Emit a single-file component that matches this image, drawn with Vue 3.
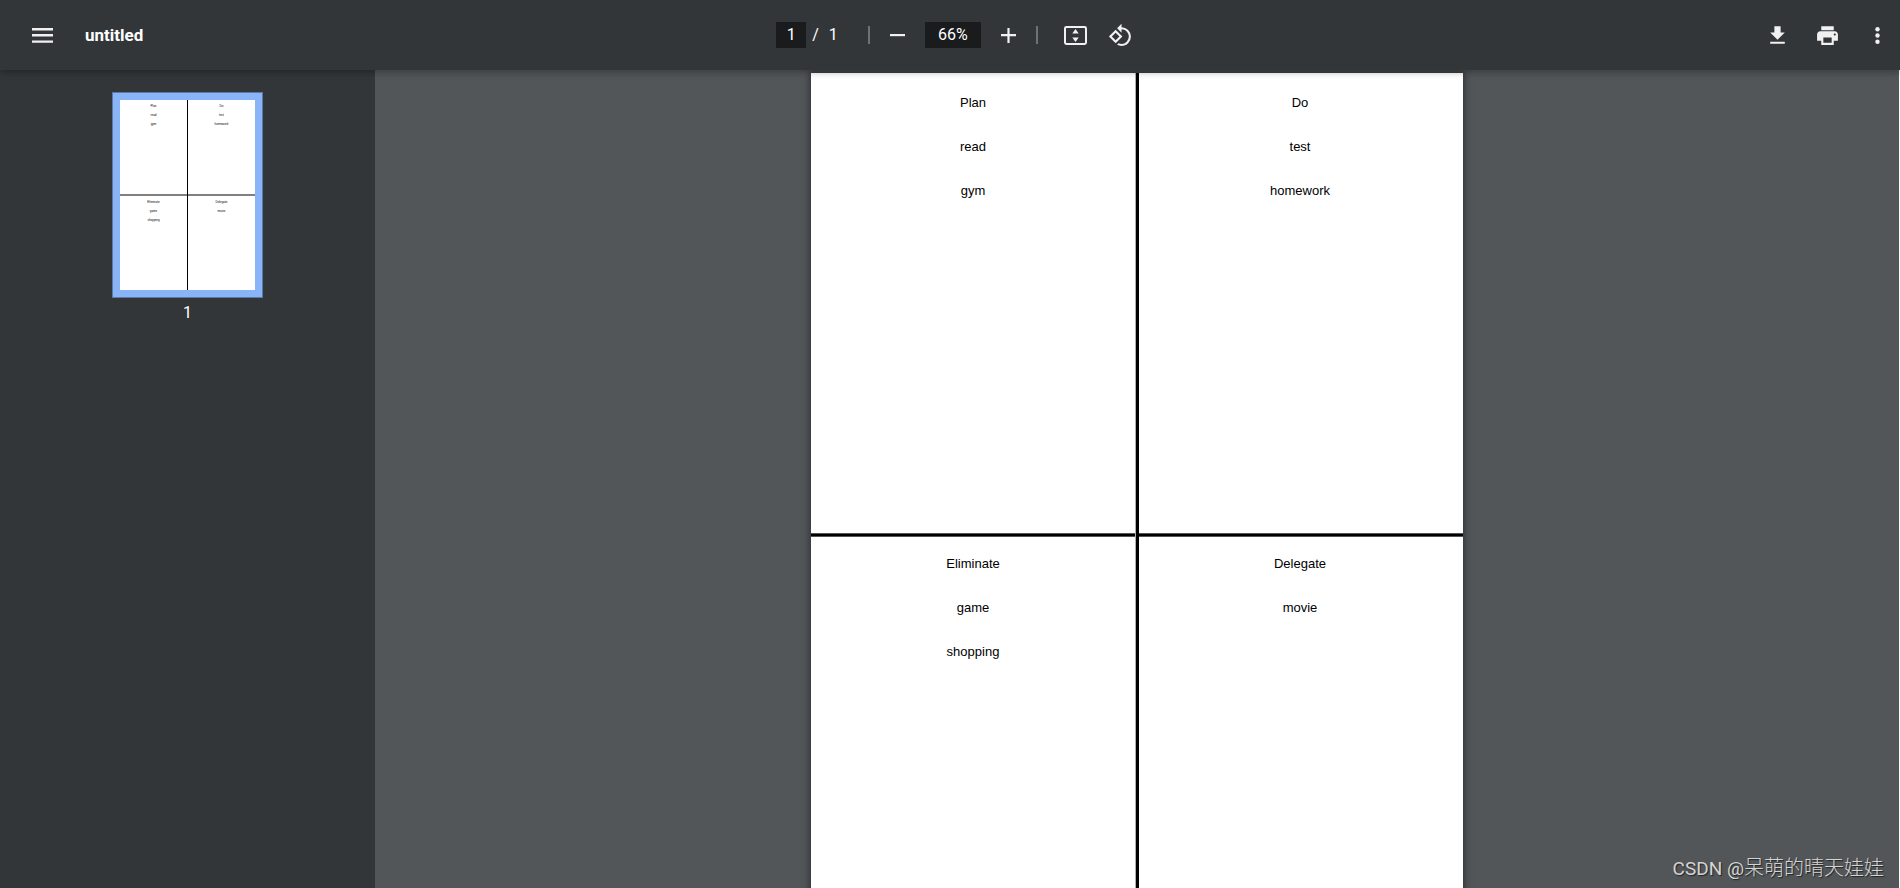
<script setup>
import { ref } from 'vue'

const pageNumber = ref('1')
const zoomLevel = ref('66%')

const quadrants = [
  { id: 'plan', items: ['Plan', 'read', 'gym'] },
  { id: 'do', items: ['Do', 'test', 'homework'] },
  { id: 'eliminate', items: ['Eliminate', 'game', 'shopping'] },
  { id: 'delegate', items: ['Delegate', 'movie'] },
]
</script>

<template>
  <div class="viewer">
    <header class="toolbar">
      <div class="start">
        <button class="tool" type="button" aria-label="Menu">
          <svg width="25" height="25" viewBox="0 0 25 25">
            <path d="M2 5h21v2.4H2zM2 11h21v2.4H2zM2 17.4h21v2.4H2z" />
          </svg>
        </button>
        <h1 class="title">untitled</h1>
      </div>

      <div class="center">
        <input v-model="pageNumber" class="field field-page" type="text" aria-label="Page number" />
        <span class="slash">/</span>
        <span class="total">1</span>
        <span class="divider"></span>
        <button class="tool" type="button" aria-label="Zoom out">
          <svg width="25" height="25" viewBox="0 0 25 25"><path d="M5 11h15v2.2H5z" /></svg>
        </button>
        <input v-model="zoomLevel" class="field field-zoom" type="text" aria-label="Zoom level" />
        <button class="tool" type="button" aria-label="Zoom in">
          <svg width="25" height="25" viewBox="0 0 25 25">
            <path d="M5 11h6.4V5h2.2v6H20v2.2h-6.4V20h-2.2v-6.8H5z" />
          </svg>
        </button>
        <span class="divider divider-wide"></span>
        <button class="tool" type="button" aria-label="Fit to page">
          <svg width="25" height="25" viewBox="0 0 25 25">
            <rect x="2" y="4" width="21" height="17" rx="1.4" fill="none" stroke="#f1f1f1" stroke-width="2" />
            <path d="M12.5 6l3.200 4.600H9.300zM12.500 19l3.200-4.600H9.300z" />
          </svg>
        </button>
        <button class="tool tool-rotate" type="button" aria-label="Rotate counterclockwise">
          <svg width="25" height="25" viewBox="0 0 24 24">
            <path
              d="M7.340 6.410L.86 12.900l6.490 6.480 6.490-6.480-6.500-6.490zM3.690 12.900l3.660-3.660L11 12.900l-3.660 3.660-3.650-3.660zm15.670-6.260A8.950 8.950 0 0 0 13 4V.760L8.760 5 13 9.240V6c1.790 0 3.580.680 4.950 2.050a7.007 7.007 0 0 1 0 9.900 6.973 6.973 0 0 1-7.790 1.440l-1.490 1.490C10.020 21.620 11.510 22 13 22c2.300 0 4.610-.880 6.360-2.640a8.980 8.980 0 0 0 0-12.720z"
            />
          </svg>
        </button>
      </div>

      <div class="end">
        <button class="tool" type="button" aria-label="Download">
          <svg width="25" height="25" viewBox="0 0 24 24">
            <path d="M19 9h-4V3H9v6H5l7 7 7-7zM5 18v2h14v-2H5z" />
          </svg>
        </button>
        <button class="tool" type="button" aria-label="Print">
          <svg width="25" height="25" viewBox="0 0 24 24">
            <path
              d="M19 8H5c-1.660 0-3 1.340-3 3v6h4v4h12v-4h4v-6c0-1.660-1.340-3-3-3zm-3 11H8v-5h8v5zm3-7c-.55 0-1-.45-1-1s.45-1 1-1 1 .45 1 1-.45 1-1 1zm-1-9H6v4h12V3z"
            />
          </svg>
        </button>
        <button class="tool" type="button" aria-label="More actions">
          <svg width="25" height="25" viewBox="0 0 25 25">
            <circle cx="12.500" cy="6.200" r="2.200" />
            <circle cx="12.500" cy="12.500" r="2.200" />
            <circle cx="12.500" cy="18.800" r="2.200" />
          </svg>
        </button>
      </div>
    </header>

    <div class="body">
      <aside class="sidebar">
        <button class="thumb" type="button" aria-label="Thumbnail for page 1">
          <span v-for="q in quadrants" :key="q.id" class="mini" :class="'at-' + q.id">
            <span v-for="item in q.items" :key="item" class="mini-line">{{ item }}</span>
          </span>
          <span class="mini-rule-h"></span>
          <span class="mini-rule-v"></span>
        </button>
        <span class="thumb-label">1</span>
      </aside>

      <main class="document">
        <article class="page">
          <section v-for="q in quadrants" :key="q.id" class="quadrant" :class="'at-' + q.id">
            <p v-for="item in q.items" :key="item" class="entry">{{ item }}</p>
          </section>
          <div class="rule-h"></div>
          <div class="rule-v"></div>
        </article>
      </main>
    </div>

    <div class="watermark"><span class="site">CSDN @</span>呆萌的晴天娃娃</div>
  </div>
</template>

<style>
body {
  background: #525659;
  overflow: hidden;
}
</style>

<style scoped>
.viewer {
  display: flex;
  flex-direction: column;
  height: 100vh;
  overflow: hidden;
  position: relative;
  font-family: Roboto, "Liberation Sans", sans-serif;
  font-size: 16px;
  color: #fff;
}

.toolbar {
  display: grid;
  grid-template-columns: 1fr auto 1fr;
  align-items: center;
  flex: none;
  height: 70px;
  background: #323639;
  box-shadow: 0 2px 8px rgba(0, 0, 0, 0.2), 0 3px 4px rgba(0, 0, 0, 0.1);
  position: relative;
  z-index: 2;
}

.start,
.center,
.end {
  display: flex;
  align-items: center;
}

.start {
  padding-left: 22px;
}

.center {
  padding-left: 17px;
}

.end {
  justify-content: flex-end;
  gap: 9px;
  padding-right: 2px;
}

.title {
  margin: 0 0 0 22px;
  font-size: 17px;
  line-height: 24px;
  font-weight: 700;
}

.tool {
  display: block;
  width: 41px;
  height: 41px;
  margin: 1px 0 0;
  padding: 8px;
  border: 0;
  border-radius: 50%;
  background: none;
}

.tool svg {
  display: block;
  fill: #f1f1f1;
}

.tool-rotate {
  margin-left: 4px;
}

.field {
  box-sizing: border-box;
  height: 26px;
  margin: 0;
  padding: 0 0 1px;
  border: 0;
  background: #191b1c;
  color: #fff;
  font: 16px Roboto, "Liberation Sans", sans-serif;
  text-align: center;
  outline: 0;
}

.field-page {
  width: 30px;
}

.field-zoom {
  width: 56px;
  margin: 0 7px;
}

.slash,
.total {
  line-height: 24px;
}

.slash {
  margin-left: 6px;
}

.total {
  width: 10px;
  margin-left: 10px;
}

.divider {
  width: 2px;
  height: 18px;
  margin: 0 7px 0 29px;
  background: #6f7274;
}

.divider-wide {
  margin: 0 17px 0 7px;
}

.body {
  display: flex;
  flex: 1;
  min-height: 0;
}

.sidebar {
  display: flex;
  flex-direction: column;
  align-items: center;
  flex: none;
  box-sizing: border-box;
  width: 375px;
  padding-top: 22px;
  background: #323639;
}

.thumb,
.page {
  display: grid;
  background: #fff;
}

.thumb {
  box-sizing: border-box;
  grid-template: 1fr 2px 1fr / 1fr 1px 1fr;
  width: 151px;
  height: 206px;
  margin: 0;
  padding: 0;
  border: 8px solid #8ab4f8;
  outline: 1px solid #5b79a8;
  outline-offset: -1px;
  color: #000;
  font: 3px "Liberation Sans", Arial, sans-serif;
}

.thumb-label {
  margin-top: 3px;
  line-height: 24px;
}

.mini {
  display: flex;
  flex-direction: column;
  align-items: center;
  padding-top: 2px;
}

.mini-line {
  line-height: 9px;
}

.at-plan {
  grid-area: 1 / 1;
}

.at-do {
  grid-area: 1 / 3;
}

.at-eliminate {
  grid-area: 3 / 1;
}

.at-delegate {
  grid-area: 3 / 3;
}

.mini-rule-h {
  grid-area: 2 / 1 / 3 / 4;
  background: #808080;
}

.mini-rule-v {
  grid-area: 1 / 2 / 4 / 3;
  background: #000;
}

.document {
  display: flex;
  justify-content: center;
  align-items: flex-start;
  flex: 1;
  overflow: hidden;
  padding-top: 3px;
  border-right: 1px solid #fff;
  background: #525659;
}

.page {
  flex: none;
  grid-template: 460px 4px 460px / 1fr 4px 1fr;
  width: 652px;
  box-shadow: 0 0 6px 2px rgba(30, 34, 38, 0.6);
  color: #000;
  font-family: "Liberation Sans", Arial, sans-serif;
}

.quadrant {
  padding-top: 8px;
}

.quadrant.at-eliminate,
.quadrant.at-delegate {
  padding-top: 5px;
}

.quadrant.at-do,
.quadrant.at-delegate {
  padding-right: 2px;
}

.entry {
  margin: 0;
  font-size: 13px;
  line-height: 44px;
  text-align: center;
}

.rule-h {
  grid-area: 2 / 1 / 3 / 4;
  box-sizing: border-box;
  border: solid #555;
  border-width: 1px 0;
  background: #000;
}

.rule-v {
  grid-area: 1 / 2 / 4 / 3;
  box-sizing: border-box;
  border-left: 1px solid #b0b0b0;
  background: #000;
}

.watermark {
  position: absolute;
  right: 16px;
  bottom: 5px;
  z-index: 3;
  font-family: Roboto, "Noto Sans CJK SC", sans-serif;
  font-size: 20px;
  font-weight: 300;
  line-height: 28px;
  color: #d4d4d4;
  text-shadow: 1px 1px 1px rgba(0, 0, 0, 0.6);
}

.site {
  font-size: 19px;
  font-weight: 400;
}
</style>
